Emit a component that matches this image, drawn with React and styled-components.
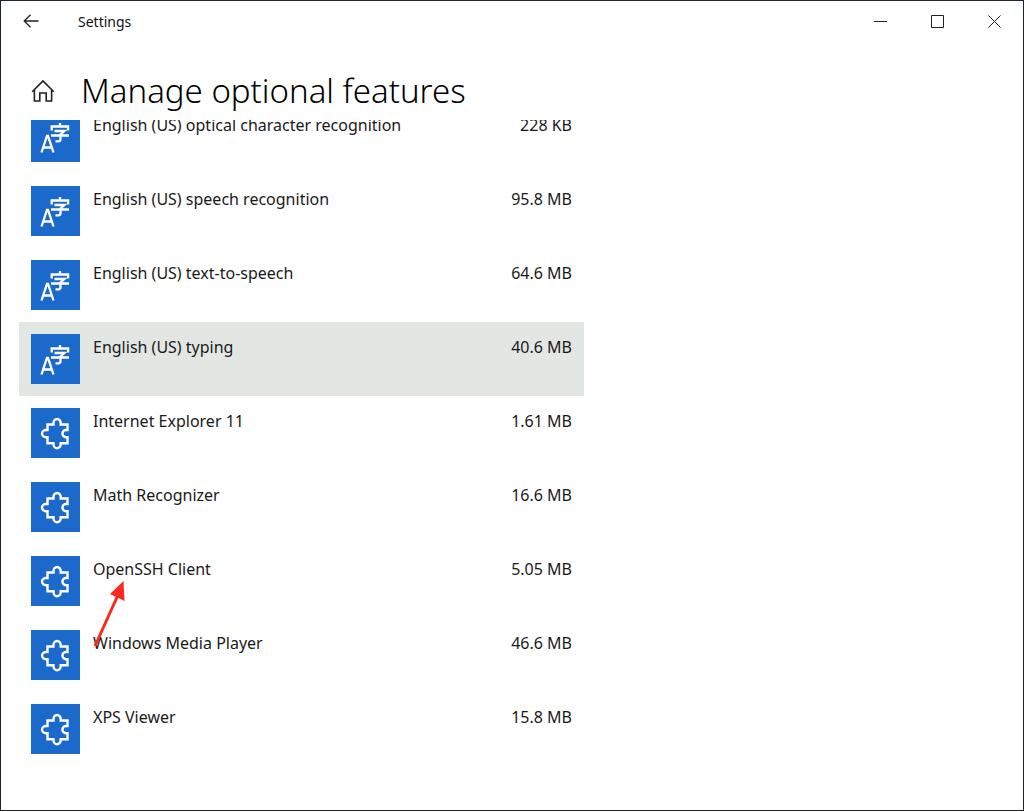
import React, { useState } from 'react';
import styled, { createGlobalStyle } from 'styled-components';

const GlobalStyle = createGlobalStyle`
  * {
    box-sizing: border-box;
  }
  body {
    margin: 0;
    background-color: #fff;
    color: #1a1a1a;
    font-family: 'Segoe UI', 'Noto Sans', 'Open Sans', sans-serif;
  }
`

const Window = styled.div`
  height: 100vh;
  display: flex;
  flex-direction: column;
  overflow: hidden;
  background-color: #fff;
  border: 1px solid #1b2433;
`

const TitleBar = styled.header`
  height: 40px;
  display: flex;
  align-items: center;
  flex-shrink: 0;
`

const IconButton = styled.button`
  width: ${(props) => props.$width}px;
  height: 40px;
  padding: 0;
  display: flex;
  align-items: center;
  justify-content: center;
  border: none;
  background: none;
  color: #222;
`

const WindowTitle = styled.span`
  flex: 1;
  padding: 2px 0 0 17px;
  color: #111;
  font-size: 14px;
  line-height: 40px;
`

const Heading = styled.div`
  height: 79px;
  padding: 20px 0 0 12px;
  display: flex;
  align-items: center;
  flex-shrink: 0;
`

const PageTitle = styled.h1`
  margin: 0;
  padding-left: 8px;
  color: #000;
  font-size: 33px;
  line-height: 48px;
  font-weight: 300;
`

const Content = styled.main`
  flex: 1;
  min-height: 0;
  overflow: hidden;
`

const FeatureList = styled.ul`
  max-width: 583px;
  margin: -20px 0 0;
  padding: 0 0 0 18px;
  list-style: none;
`

const FeatureItem = styled.li`
  position: relative;
`

const FeatureRow = styled.button`
  width: 100%;
  height: 74px;
  padding: 12px;
  display: flex;
  align-items: flex-start;
  gap: 13px;
  border: none;
  background-color: ${(props) => (props.$selected ? '#e3e7e3' : 'transparent')};
  color: inherit;
  font-family: inherit;
  font-size: 16px;
  line-height: 26px;
  text-align: left;
`

const Tile = styled.span`
  width: 49px;
  height: 50px;
  flex-shrink: 0;
  background-color: #1b6acb;

  svg {
    display: block;
  }
`

const FeatureName = styled.span`
  flex: 1;
`

const Arrow = styled.svg`
  position: absolute;
  top: 36px;
  left: 72px;
  z-index: 1;
  pointer-events: none;
`

const BackIcon = () => (
  <svg width="16" height="14" viewBox="0 0 16 14" fill="none" stroke="currentColor" strokeWidth="1.3">
    <path d="M15.5 7H1.2M7.5 .7 1.2 7l6.3 6.3" />
  </svg>
);

const HomeIcon = () => (
  <svg width="24" height="24" viewBox="0 0 24 24" fill="none" stroke="currentColor" strokeWidth="1.6">
    <path d="M1.2 12.8 12 2l10.8 10.8M3.4 11V22h5.4v-8h6.4v8h5.4V11" />
  </svg>
);

const LanguageIcon = () => (
  <svg width="49" height="50" viewBox="0 0 49 50" fill="none" stroke="#fff" strokeWidth="2.3">
    <path d="m10.500 40.500 5.500-16.500h1l5.500 16.500M12.500 35.500h8" />
    <path d="M29 11v3M20.700 18.500v-4h16.400v4M23.500 19h10L29.500 22.500v4.500q0 2.300-2 2.300h-3M20 23.500h18" />
  </svg>
);

const PuzzleIcon = () => (
  <svg width="49" height="50" viewBox="0 0 49 50" fill="none" stroke="#fff" strokeWidth="2.4">
    <path d="M16.500 16.500h6v-1.500a3.600 4 0 0 1 7.200 0v1.500h6.800v5.500H35a3.600 3.600 0 0 0 0 7.200h1.500v6H29.700v1a3.600 4 0 0 1-7.200 0v-1h-6v-6H15a4 3.600 0 0 1 0-7.200h1.500z" />
  </svg>
);

const features = [
  { name: 'English (US) optical character recognition', size: '228 KB', icon: 'language' },
  { name: 'English (US) speech recognition', size: '95.8 MB', icon: 'language' },
  { name: 'English (US) text-to-speech', size: '64.6 MB', icon: 'language' },
  { name: 'English (US) typing', size: '40.6 MB', icon: 'language' },
  { name: 'Internet Explorer 11', size: '1.61 MB', icon: 'puzzle' },
  { name: 'Math Recognizer', size: '16.6 MB', icon: 'puzzle' },
  { name: 'OpenSSH Client', size: '5.05 MB', icon: 'puzzle', arrow: true },
  { name: 'Windows Media Player', size: '46.6 MB', icon: 'puzzle' },
  { name: 'XPS Viewer', size: '15.8 MB', icon: 'puzzle' },
];

const App = () => {
  const [selected, setSelected] = useState('English (US) typing');

  return (
    <>
      <GlobalStyle />
      <Window>
        <TitleBar>
          <IconButton $width={60} aria-label="Back"><BackIcon /></IconButton>
          <WindowTitle>Settings</WindowTitle>
          <IconButton $width={57} aria-label="Minimize">
            <svg width="13" height="13" viewBox="0 0 13 13" stroke="currentColor"><path d="M0 6.5h13" /></svg>
          </IconButton>
          <IconButton $width={57} aria-label="Maximize">
            <svg width="13" height="13" viewBox="0 0 13 13" fill="none" stroke="currentColor"><path d="M.5.5h12v12H.5z" /></svg>
          </IconButton>
          <IconButton $width={57} aria-label="Close">
            <svg width="13" height="13" viewBox="0 0 13 13" stroke="currentColor"><path d="m.5.5 12 12M12.5.5l-12 12" /></svg>
          </IconButton>
        </TitleBar>
        <Heading>
          <IconButton $width={60} aria-label="Home"><HomeIcon /></IconButton>
          <PageTitle>Manage optional features</PageTitle>
        </Heading>
        <Content>
          <FeatureList>
            {features.map((feature) => (
              <FeatureItem key={feature.name}>
                <FeatureRow
                  $selected={selected === feature.name}
                  onClick={() => setSelected(feature.name)}
                >
                  <Tile>{feature.icon === 'language' ? <LanguageIcon /> : <PuzzleIcon />}</Tile>
                  <FeatureName>{feature.name}</FeatureName>
                  <span>{feature.size}</span>
                </FeatureRow>
                {feature.arrow && (
                  <Arrow width="40" height="70" viewBox="0 0 40 70">
                    <path d="M4 66 27 15" stroke="#fb2a20" strokeWidth="3" />
                    <path d="M32.5 1 19 14l14.500 7z" fill="#fb2a20" />
                  </Arrow>
                )}
              </FeatureItem>
            ))}
          </FeatureList>
        </Content>
      </Window>
    </>
  );
};

export default App;
